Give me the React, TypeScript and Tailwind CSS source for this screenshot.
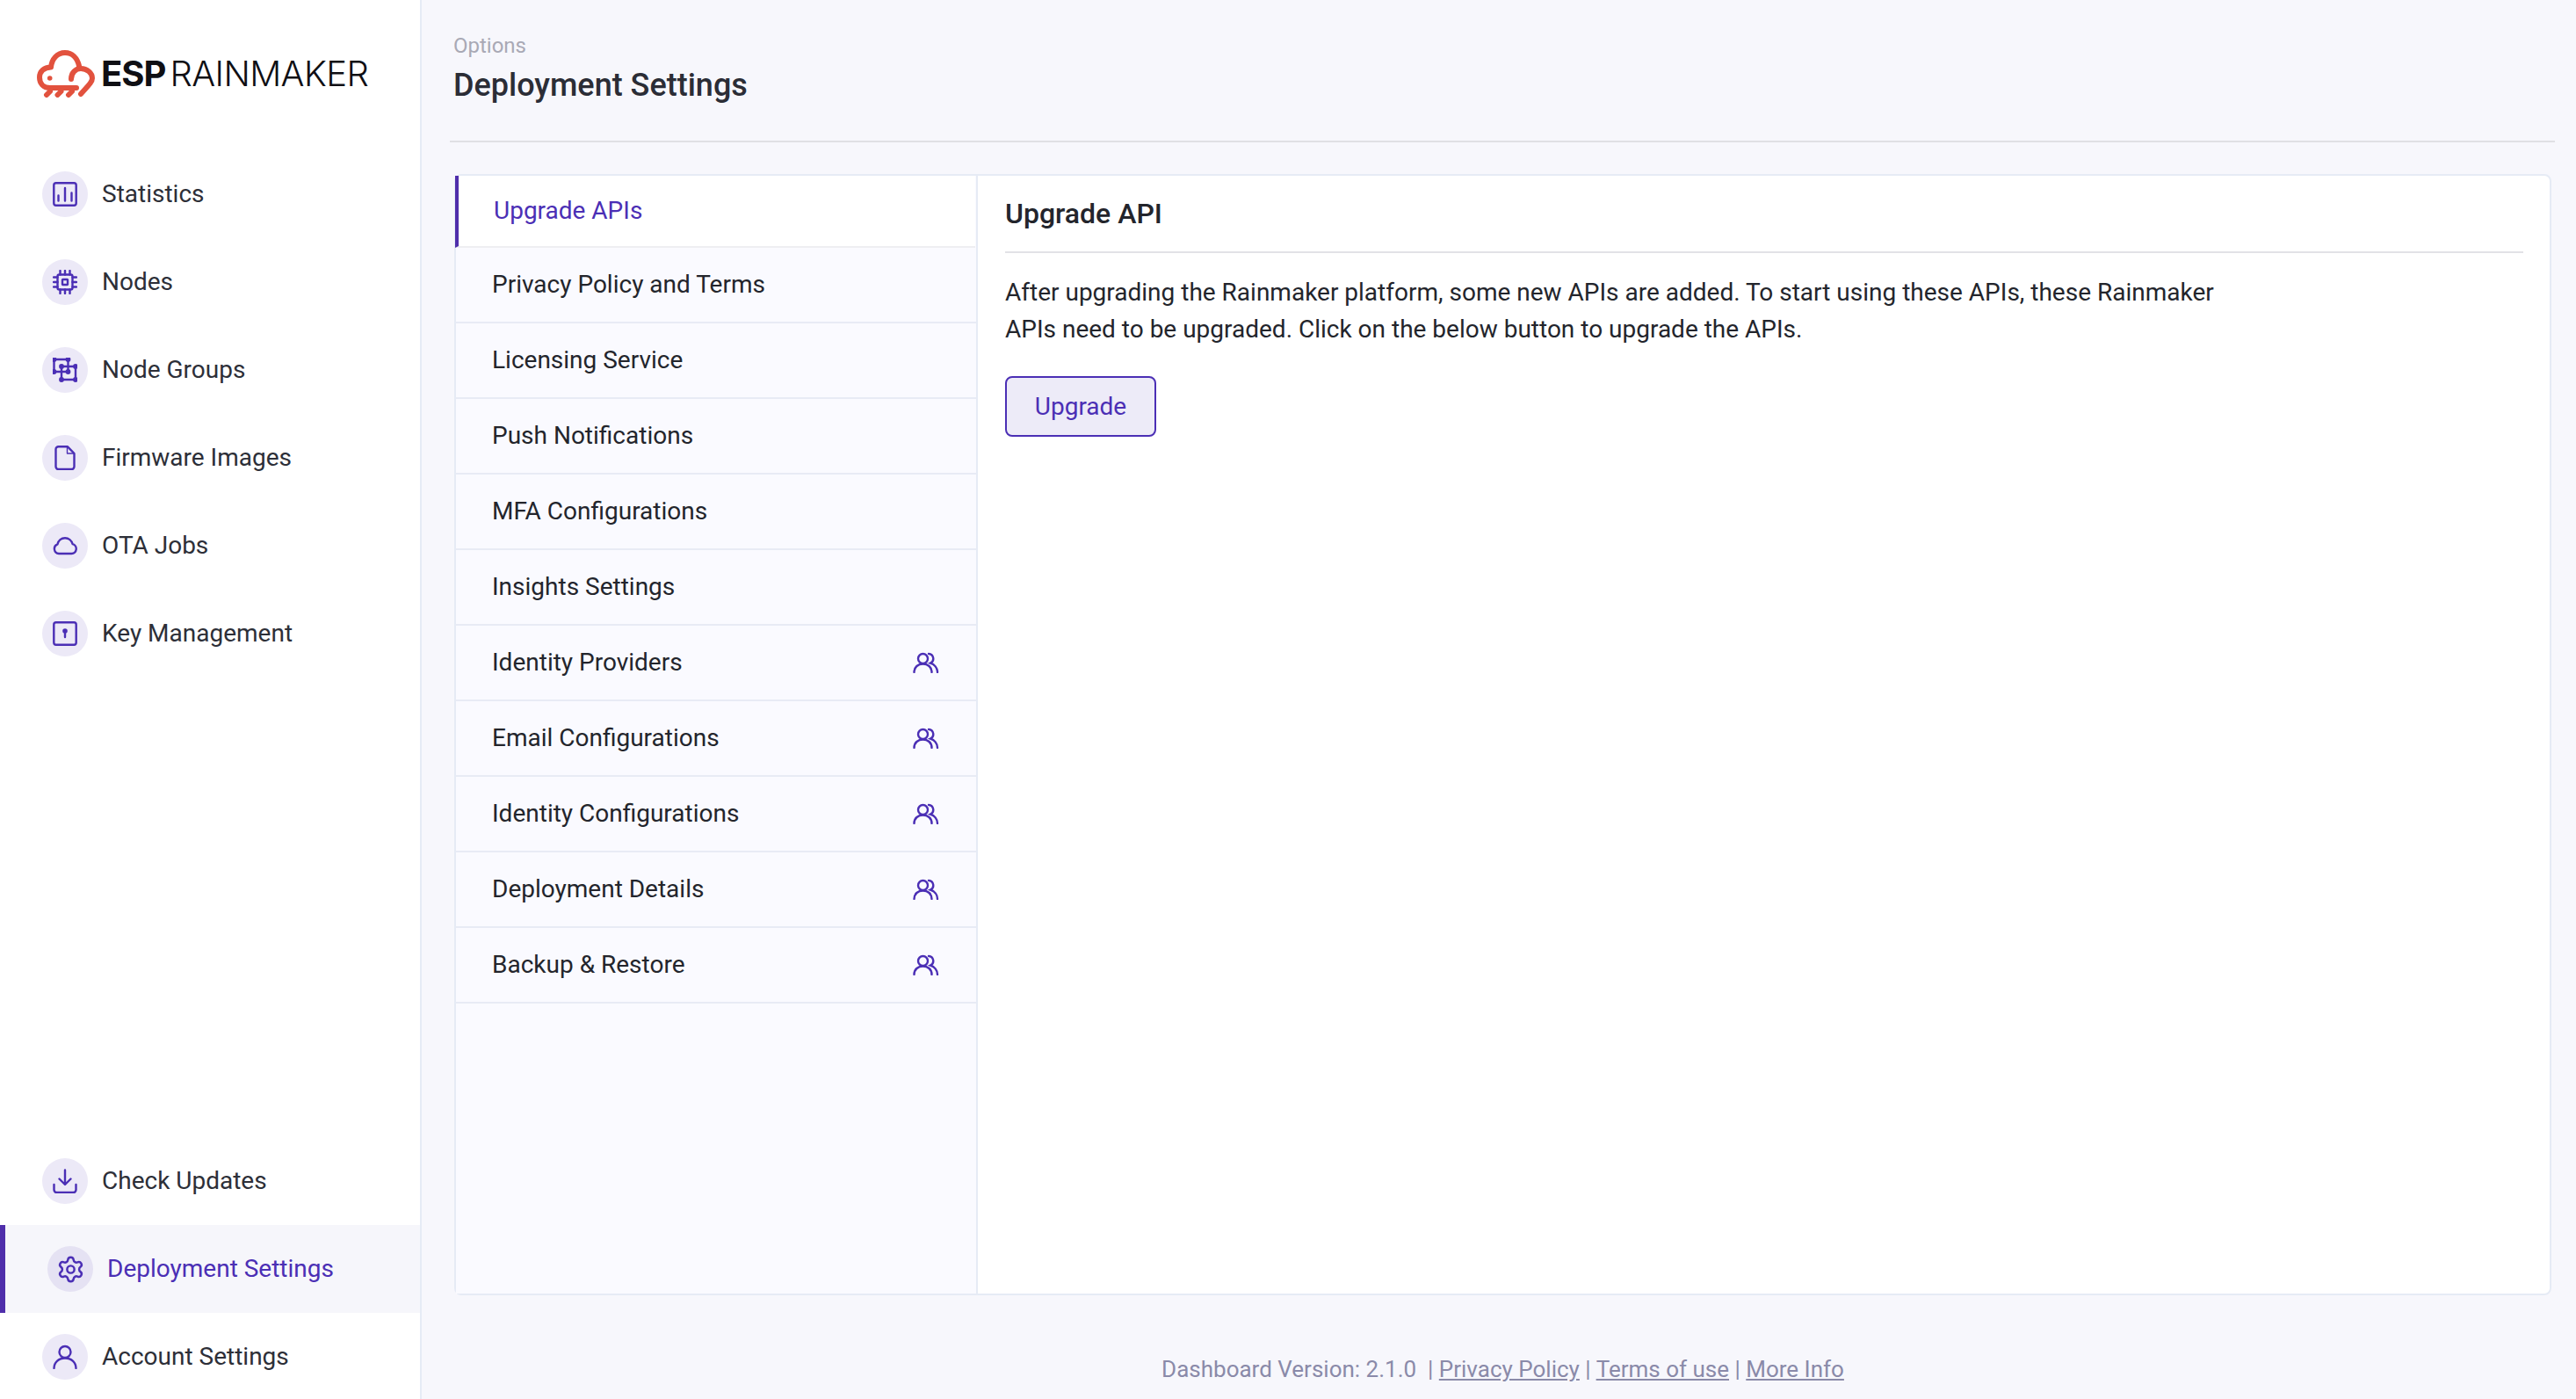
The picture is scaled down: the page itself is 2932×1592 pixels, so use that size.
import type { ReactNode } from 'react'
import { Settings } from 'lucide-react'

const PURPLE = '#4b2fb5'

// ─── Icons ───────────────────────────────────────────────────────────────────
function Ico({ children, size = 28 }: { children: ReactNode; size?: number }) {
  return (
    <svg width={size} height={size} viewBox="0 0 28 28" fill="none" stroke={PURPLE} strokeWidth="2.4" strokeLinecap="round" strokeLinejoin="round">
      {children}
    </svg>
  )
}

const StatsIcon = () => (
  <Ico>
    <rect x="1.300" y="1.300" width="25.400" height="25.400" rx="2.500" />
    <path d="M6.500 15.500v6M14 7v14.500M21.500 12.500v9" />
  </Ico>
)

const NodesIcon = () => (
  <Ico>
    <rect x="5.500" y="5.500" width="17" height="17" rx="2" />
    <rect x="11" y="11" width="6" height="6" rx="0.500" />
    <path d="M8.500 1v4.500M14 1v4.500M19.500 1v4.500M8.500 22.500V27M14 22.500V27M19.500 22.500V27M1 8.500h4.500M1 14h4.500M1 19.500h4.500M22.500 8.500H27M22.500 14H27M22.500 19.500H27" />
  </Ico>
)

const GroupIcon = () => (
  <Ico>
    <rect x="1.500" y="2" width="16" height="14" />
    <rect x="10" y="10" width="16" height="15" />
    {[[1.500, 2], [17.500, 2], [1.500, 16], [10, 10], [17.500, 16], [26, 10], [10, 25], [26, 25]].map(([cx, cy]) => (
      <circle key={`${cx}-${cy}`} cx={cx} cy={cy} r="1.700" fill={PURPLE} />
    ))}
  </Ico>
)

const FileIcon = () => (
  <Ico>
    <path d="M6 1.300h10.500L24 9v15a3 3 0 0 1-3 3H6a3 3 0 0 1-3-3V4.300a3 3 0 0 1 3-3Z" transform="translate(0.500 0)" />
    <path d="M16.500 2v7h7.500" strokeWidth="1.400" />
  </Ico>
)

const CloudIcon = () => (
  <Ico>
    <path d="M7 23h14.500a5.500 5.500 0 0 0 1.200-10.800C21.600 8 18 5.200 14 5.200c-4.200 0-7.600 3-8.600 7.200A5.500 5.500 0 0 0 7 23Z" />
  </Ico>
)

const KeyIcon = () => (
  <Ico>
    <rect x="1.300" y="1.300" width="25.400" height="25.400" rx="2.500" />
    <circle cx="14" cy="11" r="1.600" fill={PURPLE} />
    <path d="M14 12v6" />
  </Ico>
)

const DownloadIcon = () => (
  <Ico>
    <path d="M14 1.500v16M7.500 11.500l6.500 6.500 6.500-6.500M1.500 18v6a3 3 0 0 0 3 3h19a3 3 0 0 0 3-3v-6" />
  </Ico>
)

const UserIcon = () => (
  <Ico>
    <circle cx="14" cy="8.500" r="6.500" />
    <path d="M1.500 27c0-6.500 5-11.500 12.500-11.500S26.500 20.500 26.500 27" />
  </Ico>
)

const UsersIcon = () => (
  <svg width="30" height="24" viewBox="0 0 30 24" fill="none" stroke={PURPLE} strokeWidth="2.400" strokeLinecap="round">
    <circle cx="11.500" cy="7.500" r="5.500" />
    <path d="M1.500 23c0-6 4.500-9.500 10-9.500s10 3.500 10 9.500" />
    <path d="M18 2a5.500 5.500 0 0 1 2 10.500c4.500 1.500 8 5.500 8 10.500" />
  </svg>
)

// ─── Logo ────────────────────────────────────────────────────────────────────
function Logo() {
  return (
    <div className="flex items-center h-[54px] ml-[42px]">
      <svg width="66" height="54" viewBox="0 0 66 54" fill="none" stroke="#e2523e" strokeWidth="6" strokeLinecap="round" strokeLinejoin="round" className="shrink-0">
        <path d="M45 43H15C7 43 3 37.500 3 31S8 19.500 16 19.500C17 10 23 3 32 3C40 3 46 9 48 18" />
        <path d="M39 33C39 26 44 21 50 21C57 21 63 26 63 32C63 36 60 39 50 50" />
        <circle cx="14.700" cy="32" r="2.800" fill="#e2523e" stroke="none" />
        <path d="M11 51l4-4M23.500 51l4-4M36 51l4-4" />
      </svg>
      <span className="ml-[7px] text-[40px] leading-none font-['Inter',sans-serif] text-[#0f0f14] tracking-[-1px]">
        <span className="font-bold">ESP</span>
        <span className="font-light ml-[5px] tracking-[-0.6px]">RAINMAKER</span>
      </span>
    </div>
  )
}

// ─── Sidebar ─────────────────────────────────────────────────────────────────
function NavItem({ icon, label, active }: { icon: ReactNode; label: string; active?: boolean }) {
  return (
    <div className={`flex items-center h-[100px] pl-[48px] ${active ? 'bg-[#f6f6fb] border-l-[6px] border-[#4f2eab]' : ''}`}>
      <div className={`w-[52px] h-[52px] rounded-full flex items-center justify-center shrink-0 ${active ? 'bg-[#e5e2f3]' : 'bg-[#ece9f7]'}`}>
        {icon}
      </div>
      <span className={`ml-[16px] text-[28px] leading-none ${active ? 'text-[#4b2fb5]' : 'text-[#2d2f38]'}`}>{label}</span>
    </div>
  )
}

function Sidebar() {
  return (
    <aside className="w-[480px] h-[1592px] shrink-0 bg-white border-r-[2px] border-[#e6ebf5] flex flex-col justify-between">
      <div>
        <div className="pt-[57px] pb-[60px]">
          <Logo />
        </div>
        <NavItem icon={<StatsIcon />} label="Statistics" />
        <NavItem icon={<NodesIcon />} label="Nodes" />
        <NavItem icon={<GroupIcon />} label="Node Groups" />
        <NavItem icon={<FileIcon />} label="Firmware Images" />
        <NavItem icon={<CloudIcon />} label="OTA Jobs" />
        <NavItem icon={<KeyIcon />} label="Key Management" />
      </div>
      <div className="-mb-[2px]">
        <NavItem icon={<DownloadIcon />} label="Check Updates" />
        <NavItem icon={<Settings size={33} color={PURPLE} strokeWidth={1.800} />} label="Deployment Settings" active />
        <NavItem icon={<UserIcon />} label="Account Settings" />
      </div>
    </aside>
  )
}

// ─── Settings list ───────────────────────────────────────────────────────────
const settings = [
  { label: 'Privacy Policy and Terms' },
  { label: 'Licensing Service' },
  { label: 'Push Notifications' },
  { label: 'MFA Configurations' },
  { label: 'Insights Settings' },
  { label: 'Identity Providers', users: true },
  { label: 'Email Configurations', users: true },
  { label: 'Identity Configurations', users: true },
  { label: 'Deployment Details', users: true },
  { label: 'Backup & Restore', users: true },
]

function SettingsList() {
  return (
    <div className="w-[594px] shrink-0 bg-[#fafaff] border-r-[2px] border-[#e6ebf5]">
      <div className="h-[82px] bg-white border-l-[4px] border-[#4f2eab] border-b-[2px] border-b-[#eeeef2] pl-[40px] -ml-[1px] flex items-center text-[28px] text-[#4b2fb5] mr-[1px]">
        Upgrade APIs
      </div>
      {settings.map(s => (
        <div key={s.label} className="h-[86px] flex items-center justify-between pl-[41px] pr-[42px] border-b-[2px] border-[#e8ebf5] text-[28px] text-[#23252c]">
          <span>{s.label}</span>
          {s.users && <UsersIcon />}
        </div>
      ))}
    </div>
  )
}

// ─── Main Page ───────────────────────────────────────────────────────────────
export default function App() {
  return (
    <div className="flex w-[2932px] h-[1592px] overflow-hidden bg-[#f7f7fc] font-['Roboto',sans-serif]">
      <Sidebar />
      <main className="flex-1 min-w-0 flex flex-col">
        <header className="ml-[32px] mr-[24px] h-[162px] border-b-[2px] border-[#e0e0e4] pl-[4px] pt-[36px]">
          <p className="text-[24px] leading-[32px] text-[#a9a9b5]">Options</p>
          <h1 className="text-[36px] leading-[48px] font-medium text-[#2b2d36] mt-[5px]">Deployment Settings</h1>
        </header>

        <div className="ml-[37px] mr-[28px] mt-[36px] h-[1276px] flex rounded-[8px] border-[2px] border-[#e6ebf5] bg-white">
          <SettingsList />
          <section className="flex-1 min-w-0 pl-[31px] pr-[30px]">
            <h2 className="h-[88px] border-b-[2px] border-[#e2e2e6] flex items-center text-[32px] font-medium text-[#23252c]">
              Upgrade API
            </h2>
            <p className="mt-[24px] w-[1400px] text-[28px] leading-[42px] text-[#23252c]">
              After upgrading the Rainmaker platform, some new APIs are added. To start using these APIs, these Rainmaker APIs need to be upgraded. Click on the below button to upgrade the APIs.
            </p>
            <button className="mt-[32px] w-[172px] h-[69px] rounded-[8px] border-[2px] border-[#4b2fb5] bg-[#edebf8] text-[28px] text-[#4b2fb5]">
              Upgrade
            </button>
          </section>
        </div>

        <footer className="mt-[67px] pl-[9px] text-center text-[26px] leading-[34px] text-[#8a8aa9] whitespace-pre">
          Dashboard Version: 2.1.0{'  '}| <a className="underline">Privacy Policy</a> | <a className="underline">Terms of use</a> | <a className="underline">More Info</a>
        </footer>
      </main>
    </div>
  )
}
